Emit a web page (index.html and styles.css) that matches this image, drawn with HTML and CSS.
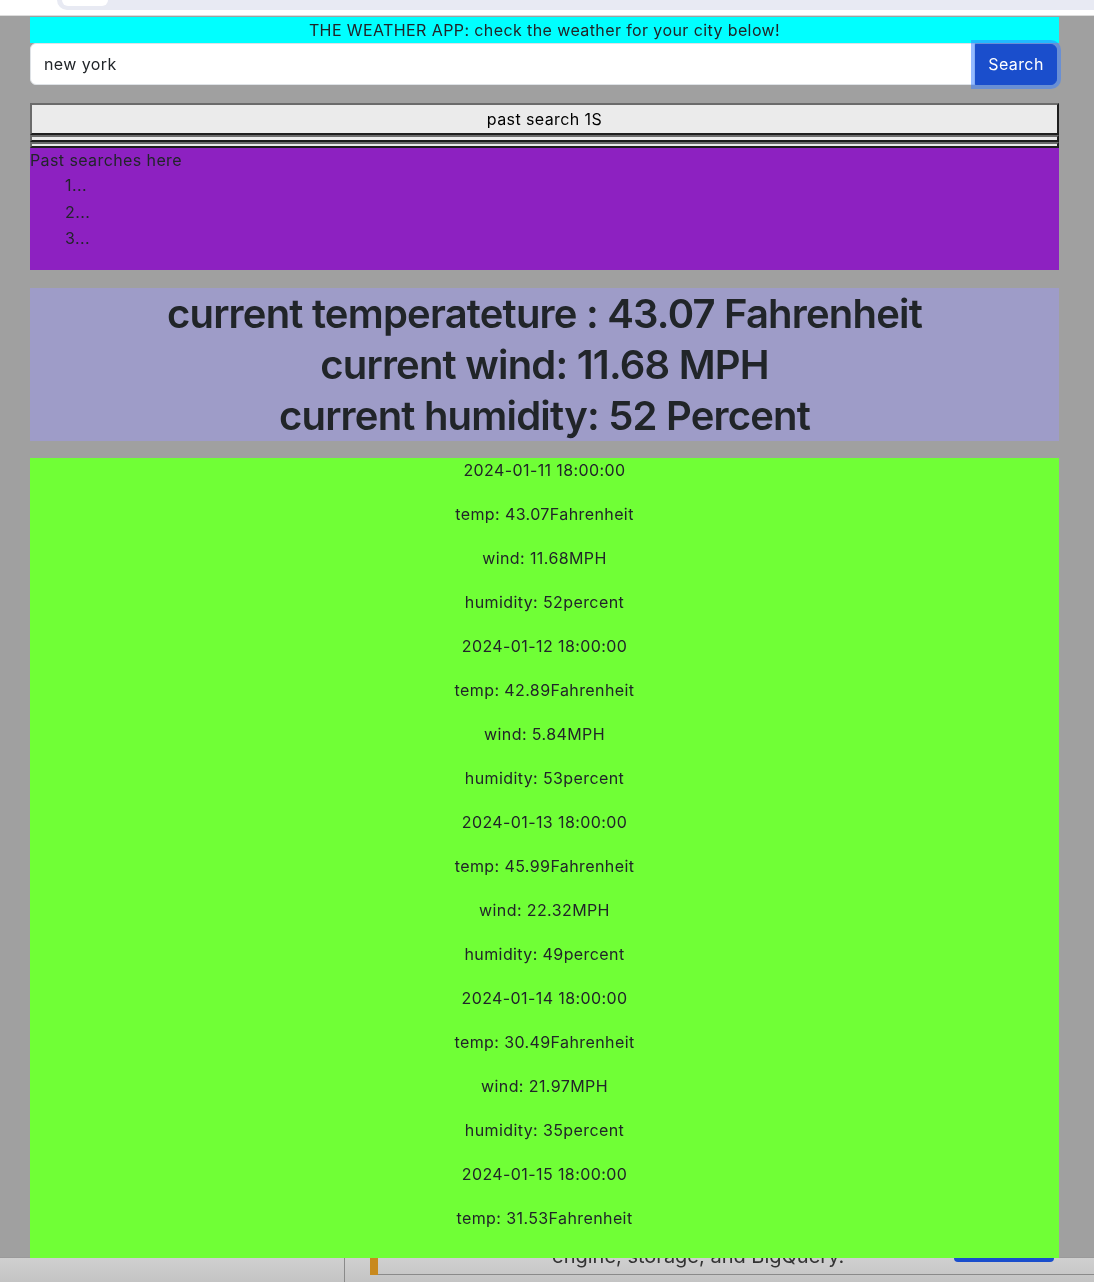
FILE: index.html
```html
<!DOCTYPE html>
<html lang="en">
<head>
<meta charset="utf-8">
<title>Weather App</title>
<link rel="stylesheet" href="styles.css">
</head>
<body>
<div class="chrome">
  <div class="chrome-band"><div class="chrome-pill"></div></div>
</div>
<main class="page">
  <header class="title">THE WEATHER APP: check the weather for your city below!</header>
  <div class="search-row">
    <input class="city-input" type="text" value="new york">
    <button class="search-btn">Search</button>
  </div>
  <div class="history-buttons">
    <button class="past-btn">past search 1S</button>
    <button class="past-btn thin"></button>
    <button class="past-btn thin"></button>
  </div>
  <section class="past">
    <div class="past-title">Past searches here</div>
    <ul class="past-list">
      <li>1...</li>
      <li>2...</li>
      <li>3...</li>
    </ul>
  </section>
  <section class="current">
    <div>current temperateture : 43.07 Fahrenheit</div>
    <div>current wind: 11.68 MPH</div>
    <div>current humidity: 52 Percent</div>
  </section>
  <section class="forecast">
    <p>2024-01-11 18:00:00</p>
    <p>temp: 43.07Fahrenheit</p>
    <p>wind: 11.68MPH</p>
    <p>humidity: 52percent</p>
    <p>2024-01-12 18:00:00</p>
    <p>temp: 42.89Fahrenheit</p>
    <p>wind: 5.84MPH</p>
    <p>humidity: 53percent</p>
    <p>2024-01-13 18:00:00</p>
    <p>temp: 45.99Fahrenheit</p>
    <p>wind: 22.32MPH</p>
    <p>humidity: 49percent</p>
    <p>2024-01-14 18:00:00</p>
    <p>temp: 30.49Fahrenheit</p>
    <p>wind: 21.97MPH</p>
    <p>humidity: 35percent</p>
    <p>2024-01-15 18:00:00</p>
    <p>temp: 31.53Fahrenheit</p>
  </section>
</main>
<div class="dock">
  <div class="dock-divider"></div>
  <div class="dock-mark"></div>
  <div class="dock-box"></div>
  <div class="dock-text">engine, storage, and BigQuery.</div>
  <div class="dock-btn"></div>
</div>
</body>
</html>
```

FILE: styles.css
```css
html, body {
  margin: 0;
  padding: 0;
}
body {
  background: #a0a0a0;
  font-family: Inter, "Noto Sans", "DejaVu Sans", sans-serif;
  color: #212529;
  font-size: 16px;
  line-height: 24px;
  letter-spacing: 0.4px;
  height: 1282px;
  overflow: hidden;
}
.chrome {
  height: 15px;
  background: #fff;
  border-bottom: 1px solid #dcdcdc;
}
.chrome-band {
  margin-left: 57px;
  height: 10px;
  background: #e8eaf3;
  border-bottom-left-radius: 10px;
  display: flex;
  align-items: flex-start;
  overflow: hidden;
}
.chrome-pill {
  width: 46px;
  height: 6px;
  margin-left: 5px;
  background: #fff;
  border-radius: 0 0 8px 8px;
}
.page {
  width: 1029px;
  margin: 1px 0 0 30px;
}
.title {
  background: #00ffff;
  text-align: center;
  height: 26px;
  line-height: 26px;
}
.search-row {
  display: flex;
  align-items: center;
  height: 42px;
}
.city-input {
  flex: 1;
  height: 42px;
  box-sizing: border-box;
  border: 1px solid #dee2e6;
  border-radius: 6px 0 0 6px;
  padding: 0 13px;
  font-family: inherit;
  font-size: 16px;
  letter-spacing: 0.4px;
  color: #212529;
  background: #fff;
  outline: none;
}
.search-btn {
  width: 82px;
  height: 41px;
  margin-right: 2px;
  box-sizing: border-box;
  border: 1px solid #1a4ecc;
  border-radius: 0 6px 6px 0;
  background: #1a4ecc;
  color: #fff;
  font-family: inherit;
  font-size: 16px;
  letter-spacing: 0.4px;
  box-shadow: 0 0 0 4px rgba(60, 130, 255, 0.55);
  position: relative;
  z-index: 1;
}
.history-buttons {
  margin-top: 18px;
  display: flex;
  flex-direction: column;
}
.past-btn {
  display: block;
  width: 100%;
  height: 32px;
  box-sizing: border-box;
  border-style: solid;
  border-width: 2px;
  border-color: #6b6b6b #1e1e1e #1e1e1e #6b6b6b;
  background: #ebebeb;
  color: #000;
  font-family: inherit;
  font-size: 16px;
  letter-spacing: 0.4px;
  padding: 0;
  margin: 0;
}
.past-btn.thin {
  height: 7px;
}
.past-btn.thin:last-child {
  height: 6px;
}
.past {
  background: #8d21c1;
  padding-bottom: 18px;
}
.past-title {
  line-height: 24px;
}
.past-list {
  list-style: none;
  margin: 0;
  padding-left: 35px;
}
.past-list li {
  line-height: 26.5px;
}
.current {
  margin-top: 18px;
  background: #9e9cc8;
  text-align: center;
  font-size: 40px;
  line-height: 51px;
  font-weight: 600;
  letter-spacing: -0.8px;
}
.forecast {
  margin-top: 17px;
  background: #70ff36;
  text-align: center;
  padding-bottom: 8px;
}
.forecast p {
  margin: 0 0 20px;
  line-height: 24px;
}
.dock {
  position: fixed;
  left: 0;
  right: 0;
  bottom: 0;
  height: 24px;
  background: linear-gradient(#d0d0d0, #c4c4c4);
  border-top: 1px solid #9a9a9a;
  z-index: -1;
}
.dock-divider {
  position: absolute;
  left: 344px;
  top: 0;
  bottom: 0;
  width: 1px;
  background: #8a8a8a;
}
.dock-mark {
  position: absolute;
  left: 370px;
  top: 0;
  width: 8px;
  height: 17px;
  background: #c8891e;
}
.dock-box {
  position: absolute;
  left: 378px;
  right: 0;
  top: 16px;
  height: 1px;
  background: #8a8a8a;
}
.dock-text {
  position: absolute;
  left: 552px;
  top: -14px;
  font-size: 20px;
  line-height: 24px;
  letter-spacing: 0;
  color: #333;
}
.dock-btn {
  position: absolute;
  left: 954px;
  top: 0;
  width: 100px;
  height: 4px;
  background: #1a4ecc;
  border-radius: 0 0 4px 4px;
}
```
